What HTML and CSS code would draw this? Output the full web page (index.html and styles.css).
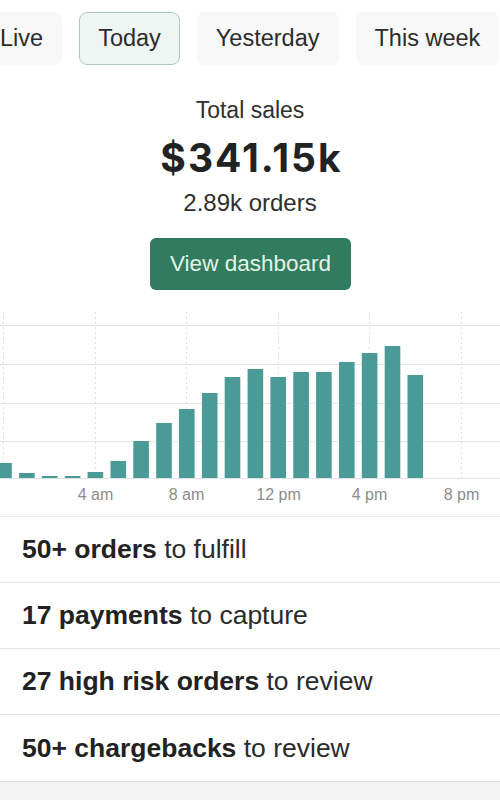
FILE: index.html
```html
<!DOCTYPE html>
<html lang="en">
<head>
<meta charset="utf-8">
<title>Sales overview</title>
<link rel="stylesheet" href="styles.css">
</head>
<body>
<main class="page">
  <nav class="tabs">
    <button class="tab">Live</button>
    <button class="tab tab-active">Today</button>
    <button class="tab">Yesterday</button>
    <button class="tab">This week</button>
  </nav>

  <section class="summary">
    <div class="summary-label">Total sales</div>
    <div class="summary-value">$341.15k</div>
    <div class="summary-orders">2.89k orders</div>
    <button class="cta">View dashboard</button>
  </section>

  <section class="chart">
    <svg class="chart-svg" width="500" height="216" viewBox="0 0 500 216" xmlns="http://www.w3.org/2000/svg">
      <g class="grid-h">
        <line x1="0" y1="25.5" x2="500" y2="25.5"/>
        <line x1="0" y1="64.5" x2="500" y2="64.5"/>
        <line x1="0" y1="103.5" x2="500" y2="103.5"/>
        <line x1="0" y1="141.5" x2="500" y2="141.5"/>
      </g>
      <g class="grid-v">
        <line x1="3.5" y1="12" x2="3.5" y2="178"/>
        <line x1="95.5" y1="12" x2="95.5" y2="178"/>
        <line x1="186.5" y1="12" x2="186.5" y2="178"/>
        <line x1="278.5" y1="12" x2="278.5" y2="178"/>
        <line x1="369.5" y1="12" x2="369.5" y2="178"/>
        <line x1="461.5" y1="12" x2="461.5" y2="178"/>
      </g>
      <line class="baseline" x1="0" y1="178.5" x2="500" y2="178.5"/>
      <g class="bars">
        <rect x="-3.8" y="163" width="15.6" height="15"/>
        <rect x="19.1" y="173" width="15.6" height="5"/>
        <rect x="41.9" y="176" width="15.6" height="2"/>
        <rect x="64.8" y="176" width="15.6" height="2"/>
        <rect x="87.6" y="172" width="15.6" height="6"/>
        <rect x="110.5" y="161" width="15.6" height="17"/>
        <rect x="133.3" y="141" width="15.6" height="37"/>
        <rect x="156.2" y="123" width="15.6" height="55"/>
        <rect x="179.0" y="109" width="15.6" height="69"/>
        <rect x="201.9" y="93" width="15.6" height="85"/>
        <rect x="224.7" y="77" width="15.6" height="101"/>
        <rect x="247.6" y="69" width="15.6" height="109"/>
        <rect x="270.4" y="77" width="15.6" height="101"/>
        <rect x="293.3" y="72" width="15.6" height="106"/>
        <rect x="316.1" y="72" width="15.6" height="106"/>
        <rect x="339.0" y="62" width="15.6" height="116"/>
        <rect x="361.8" y="53" width="15.6" height="125"/>
        <rect x="384.7" y="46" width="15.6" height="132"/>
        <rect x="407.5" y="75" width="15.6" height="103"/>
      </g>
      <g class="axis">
        <text x="95.5" y="200">4 am</text>
        <text x="186.5" y="200">8 am</text>
        <text x="278.5" y="200">12 pm</text>
        <text x="369.5" y="200">4 pm</text>
        <text x="461.5" y="200">8 pm</text>
      </g>
    </svg>
  </section>

  <ul class="tasks">
    <li class="task"><b>50+ orders</b> to fulfill</li>
    <li class="task"><b>17 payments</b> to capture</li>
    <li class="task"><b>27 high risk orders</b> to review</li>
    <li class="task"><b>50+ chargebacks</b> to review</li>
  </ul>
</main>
</body>
</html>
```

FILE: styles.css
```css
* {
  box-sizing: border-box;
}

html, body {
  margin: 0;
  padding: 0;
}

body {
  background: #f4f4f4;
  font-family: "Liberation Sans", Arial, sans-serif;
  color: #2b2b2b;
  overflow: hidden;
}

.page {
  background: #ffffff;
  width: 500px;
  overflow: hidden;
  border-bottom: 1px solid #d8d8d8;
}

.tabs {
  display: flex;
  gap: 17px;
  margin: 12px 0 0 -19px;
  white-space: nowrap;
}

.tab {
  flex: none;
  height: 53px;
  padding: 0 18px;
  border: 1px solid transparent;
  border-radius: 8px;
  background: #f8f8f8;
  font-family: "Liberation Sans", Arial, sans-serif;
  font-size: 23.5px;
  color: #2c2c2c;
}

.tab-active {
  background: #eef5f2;
  border-color: #afc9bf;
}

.summary {
  display: flex;
  flex-direction: column;
  align-items: center;
  padding-top: 31px;
}

.summary-label {
  font-size: 23px;
  line-height: 28px;
  color: #2f2f2f;
}

.summary-value {
  margin-top: 12px;
  font-family: Inter, "Liberation Sans", sans-serif;
  font-size: 39px;
  line-height: 44px;
  font-weight: 700;
  letter-spacing: 2px;
  color: #222222;
  padding-left: 3px;
}

.summary-orders {
  margin-top: 9px;
  font-size: 24px;
  line-height: 28px;
  color: #2f2f2f;
}

.cta {
  margin-top: 21px;
  width: 201px;
  height: 52px;
  margin-left: 1px;
  border: none;
  border-radius: 6px;
  background: #317c5f;
  color: #e2f3ea;
  font-family: "Liberation Sans", Arial, sans-serif;
  font-size: 22.5px;
}

.chart {
  margin-top: 10px;
}

.chart-svg {
  display: block;
}

.grid-h line {
  stroke: #e6e6e6;
  stroke-width: 1;
}

.grid-v line {
  stroke: #dddddd;
  stroke-width: 1;
  stroke-dasharray: 2 3;
}

.baseline {
  stroke: #e2e2e2;
  stroke-width: 1;
}

.bars rect {
  fill: #4a9a98;
}

.axis text {
  font-family: "Liberation Sans", Arial, sans-serif;
  font-size: 16px;
  fill: #8c8c8c;
  text-anchor: middle;
}

.tasks {
  list-style: none;
  margin: 0;
  padding: 0;
  border-top: 1px solid #ececec;
}

.task {
  display: flex;
  align-items: center;
  height: 66px;
  padding-left: 22px;
  border-bottom: 1px solid #e3e3e3;
  font-size: 26.5px;
  color: #2b2b2b;
  white-space: pre;
}

.task:last-child {
  border-bottom: none;
}

.task b {
  font-weight: 700;
  color: #222222;
}
```
